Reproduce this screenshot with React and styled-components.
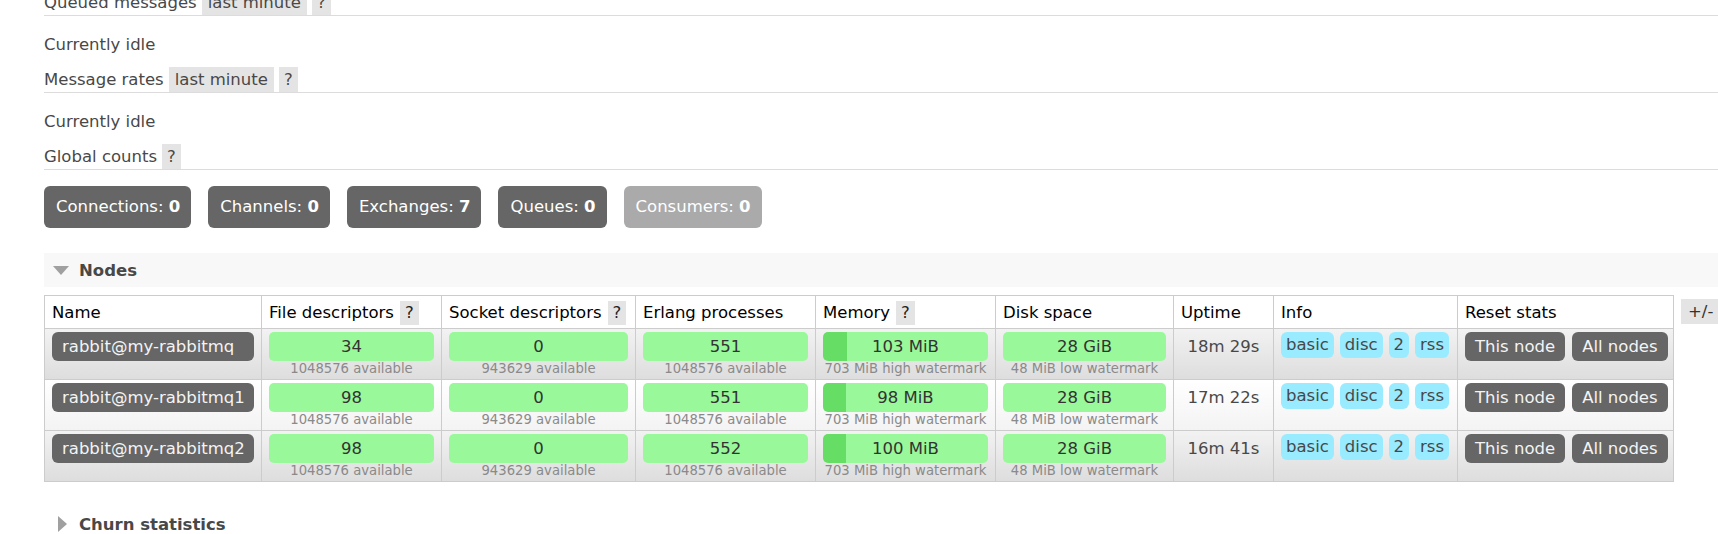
import React from 'react';
import styled, { createGlobalStyle } from 'styled-components';

const GlobalStyle = createGlobalStyle`
  * { box-sizing: border-box; }
  html, body {
    margin: 0;
    padding: 0;
    background: #fff;
    overflow: hidden;
  }
  body {
    font-family: "DejaVu Sans", Verdana, sans-serif;
    font-size: 16.5px;
    color: #484848;
  }
`;

const Page = styled.div`
  margin-top: -10px;
  padding-left: 44px;
`;

const Heading = styled.div`
  display: flex;
  align-items: flex-end;
  gap: 5px;
  height: 26px;
  border-bottom: 1px solid #dcdcdc;
  line-height: 25px;
`;

const HelpBox = styled.span`
  display: inline-block;
  height: 25px;
  line-height: 25px;
  padding: 0 ${(p) => (p.$wide ? '6px' : '5px')};
  background: #e4e4e4;
  color: #484848;
`;

const Idle = styled.p`
  margin: 19px 0 12px;
  line-height: 20px;
`;

const CountsRow = styled.div`
  display: flex;
  gap: 17px;
  margin-top: 16px;
`;

const CountButton = styled.div`
  height: 42px;
  line-height: 42px;
  padding: 0 11px 0 12px;
  border-radius: 6px;
  background: ${(p) => (p.$faded ? '#aaaaaa' : '#666666')};
  color: #fff;

  b { font-weight: bold; }
`;

const SectionHeader = styled.div`
  display: flex;
  align-items: center;
  height: 34px;
  margin-top: ${(p) => p.$top}px;
  padding-left: ${(p) => (p.$open ? '9px' : '14px')};
  gap: ${(p) => (p.$open ? '10px' : '12px')};
  background: ${(p) => (p.$open ? '#f8f8f8' : 'transparent')};
  font-weight: bold;
  color: #484848;
`;

const TableRow = styled.div`
  display: flex;
  align-items: flex-start;
  gap: 7px;
  margin-top: 8px;
`;

const Table = styled.table`
  width: 1629px;
  flex: none;
  table-layout: fixed;
  border-collapse: collapse;
  border: 1px solid #cccccc;
`;

const Col = styled.col`
  width: ${(p) => p.$w}px;
`;

const Th = styled.th`
  text-align: left;
  font-weight: normal;
  color: #000;
  padding: 4px 7px 3px;
  height: 33px;
  border: 1px solid #cccccc;
  background: #fff;
  white-space: nowrap;

  ${HelpBox} {
    height: 24px;
    line-height: 24px;
    margin-left: 6px;
    color: #222;
  }
`;

const Tr = styled.tr`
  background: ${(p) =>
    p.$alt
      ? 'linear-gradient(#ffffff, #f3f3f3)'
      : 'linear-gradient(#f2f2f2, #dddddd)'};
`;

const Td = styled.td`
  vertical-align: top;
  padding: 3px 7px 2px;
  height: 51px;
  border: 1px solid #cccccc;
  text-align: ${(p) => p.$align || 'left'};
  white-space: nowrap;
`;

const NamePill = styled.div`
  height: 29px;
  line-height: 29px;
  padding: 0 10px;
  border-radius: 6px;
  background: #666666;
  color: #f4f4f4;
`;

const Bar = styled.div`
  height: 29px;
  line-height: 29px;
  text-align: center;
  border-radius: 5px;
  color: #333;
  background: ${(p) =>
    p.$fill != null
      ? `linear-gradient(to right, #66de66 ${p.$fill}%, #99f899 ${p.$fill}%)`
      : '#99f899'};
`;

const SubText = styled.div`
  text-align: center;
  font-size: 13.2px;
  line-height: 16px;
  color: #8a8a8a;
`;

const Uptime = styled.div`
  line-height: 29px;
  color: #484848;
`;

const Badges = styled.div`
  display: flex;
  gap: 6px;
`;

const Badge = styled.span`
  height: 26px;
  line-height: 26px;
  padding: 0 5px;
  border-radius: 6px;
  background: #99ebff;
  color: #484848;
`;

const Buttons = styled.div`
  display: flex;
  gap: 7px;
`;

const ResetButton = styled.span`
  height: 29px;
  line-height: 29px;
  padding: 0 10px;
  border-radius: 6px;
  background: #666666;
  color: #f4f4f4;
`;

const ToggleColumns = styled.span`
  flex: none;
  margin-top: 4px;
  height: 25px;
  line-height: 25px;
  padding: 0 7px;
  background: #e4e4e4;
  color: #333;
`;

const DownArrow = () => (
  <svg width="16" height="9" viewBox="0 0 16 9">
    <polygon points="0,0 16,0 8,9" fill="#a0a0a0" />
  </svg>
);

const RightArrow = () => (
  <svg width="9" height="16" viewBox="0 0 9 16">
    <polygon points="0,0 9,8 0,16" fill="#a0a0a0" />
  </svg>
);

const counts = [
  { label: 'Connections', value: 0 },
  { label: 'Channels', value: 0 },
  { label: 'Exchanges', value: 7 },
  { label: 'Queues', value: 0 },
  { label: 'Consumers', value: 0, faded: true },
];

const nodes = [
  { name: 'rabbit@my-rabbitmq', fd: 34, erl: 551, mem: 103, uptime: '18m 29s' },
  { name: 'rabbit@my-rabbitmq1', fd: 98, erl: 551, mem: 98, uptime: '17m 22s' },
  { name: 'rabbit@my-rabbitmq2', fd: 98, erl: 552, mem: 100, uptime: '16m 41s' },
];

const MEM_LIMIT = 703;
const colWidths = [217, 180, 194, 180, 180, 178, 100, 184, 216];

const App = () => (
  <>
    <GlobalStyle />
    <Page>
      <Heading>
        Queued messages <HelpBox $wide>last minute</HelpBox>
        <HelpBox>?</HelpBox>
      </Heading>
      <Idle>Currently idle</Idle>

      <Heading>
        Message rates <HelpBox $wide>last minute</HelpBox>
        <HelpBox>?</HelpBox>
      </Heading>
      <Idle>Currently idle</Idle>

      <Heading>
        Global counts <HelpBox>?</HelpBox>
      </Heading>

      <CountsRow>
        {counts.map((c) => (
          <CountButton key={c.label} $faded={c.faded}>
            {c.label}: <b>{c.value}</b>
          </CountButton>
        ))}
      </CountsRow>

      <SectionHeader $open $top={25}>
        <DownArrow />
        Nodes
      </SectionHeader>

      <TableRow>
        <Table>
          <colgroup>
            {colWidths.map((w, i) => (
              <Col key={i} $w={w} />
            ))}
          </colgroup>
          <thead>
            <tr>
              <Th>Name</Th>
              <Th>File descriptors<HelpBox>?</HelpBox></Th>
              <Th>Socket descriptors<HelpBox>?</HelpBox></Th>
              <Th>Erlang processes</Th>
              <Th>Memory<HelpBox>?</HelpBox></Th>
              <Th>Disk space</Th>
              <Th>Uptime</Th>
              <Th>Info</Th>
              <Th>Reset stats</Th>
            </tr>
          </thead>
          <tbody>
            {nodes.map((n, i) => (
              <Tr key={n.name} $alt={i % 2 === 1}>
                <Td>
                  <NamePill>{n.name}</NamePill>
                </Td>
                <Td>
                  <Bar>{n.fd}</Bar>
                  <SubText>1048576 available</SubText>
                </Td>
                <Td>
                  <Bar>0</Bar>
                  <SubText>943629 available</SubText>
                </Td>
                <Td>
                  <Bar>{n.erl}</Bar>
                  <SubText>1048576 available</SubText>
                </Td>
                <Td>
                  <Bar $fill={(n.mem / MEM_LIMIT) * 100}>{n.mem} MiB</Bar>
                  <SubText>703 MiB high watermark</SubText>
                </Td>
                <Td>
                  <Bar>28 GiB</Bar>
                  <SubText>48 MiB low watermark</SubText>
                </Td>
                <Td $align="center">
                  <Uptime>{n.uptime}</Uptime>
                </Td>
                <Td>
                  <Badges>
                    <Badge>basic</Badge>
                    <Badge>disc</Badge>
                    <Badge>2</Badge>
                    <Badge>rss</Badge>
                  </Badges>
                </Td>
                <Td>
                  <Buttons>
                    <ResetButton>This node</ResetButton>
                    <ResetButton>All nodes</ResetButton>
                  </Buttons>
                </Td>
              </Tr>
            ))}
          </tbody>
        </Table>
        <ToggleColumns>+/-</ToggleColumns>
      </TableRow>

      <SectionHeader $top={25}>
        <RightArrow />
        Churn statistics
      </SectionHeader>
    </Page>
  </>
);

export default App;
